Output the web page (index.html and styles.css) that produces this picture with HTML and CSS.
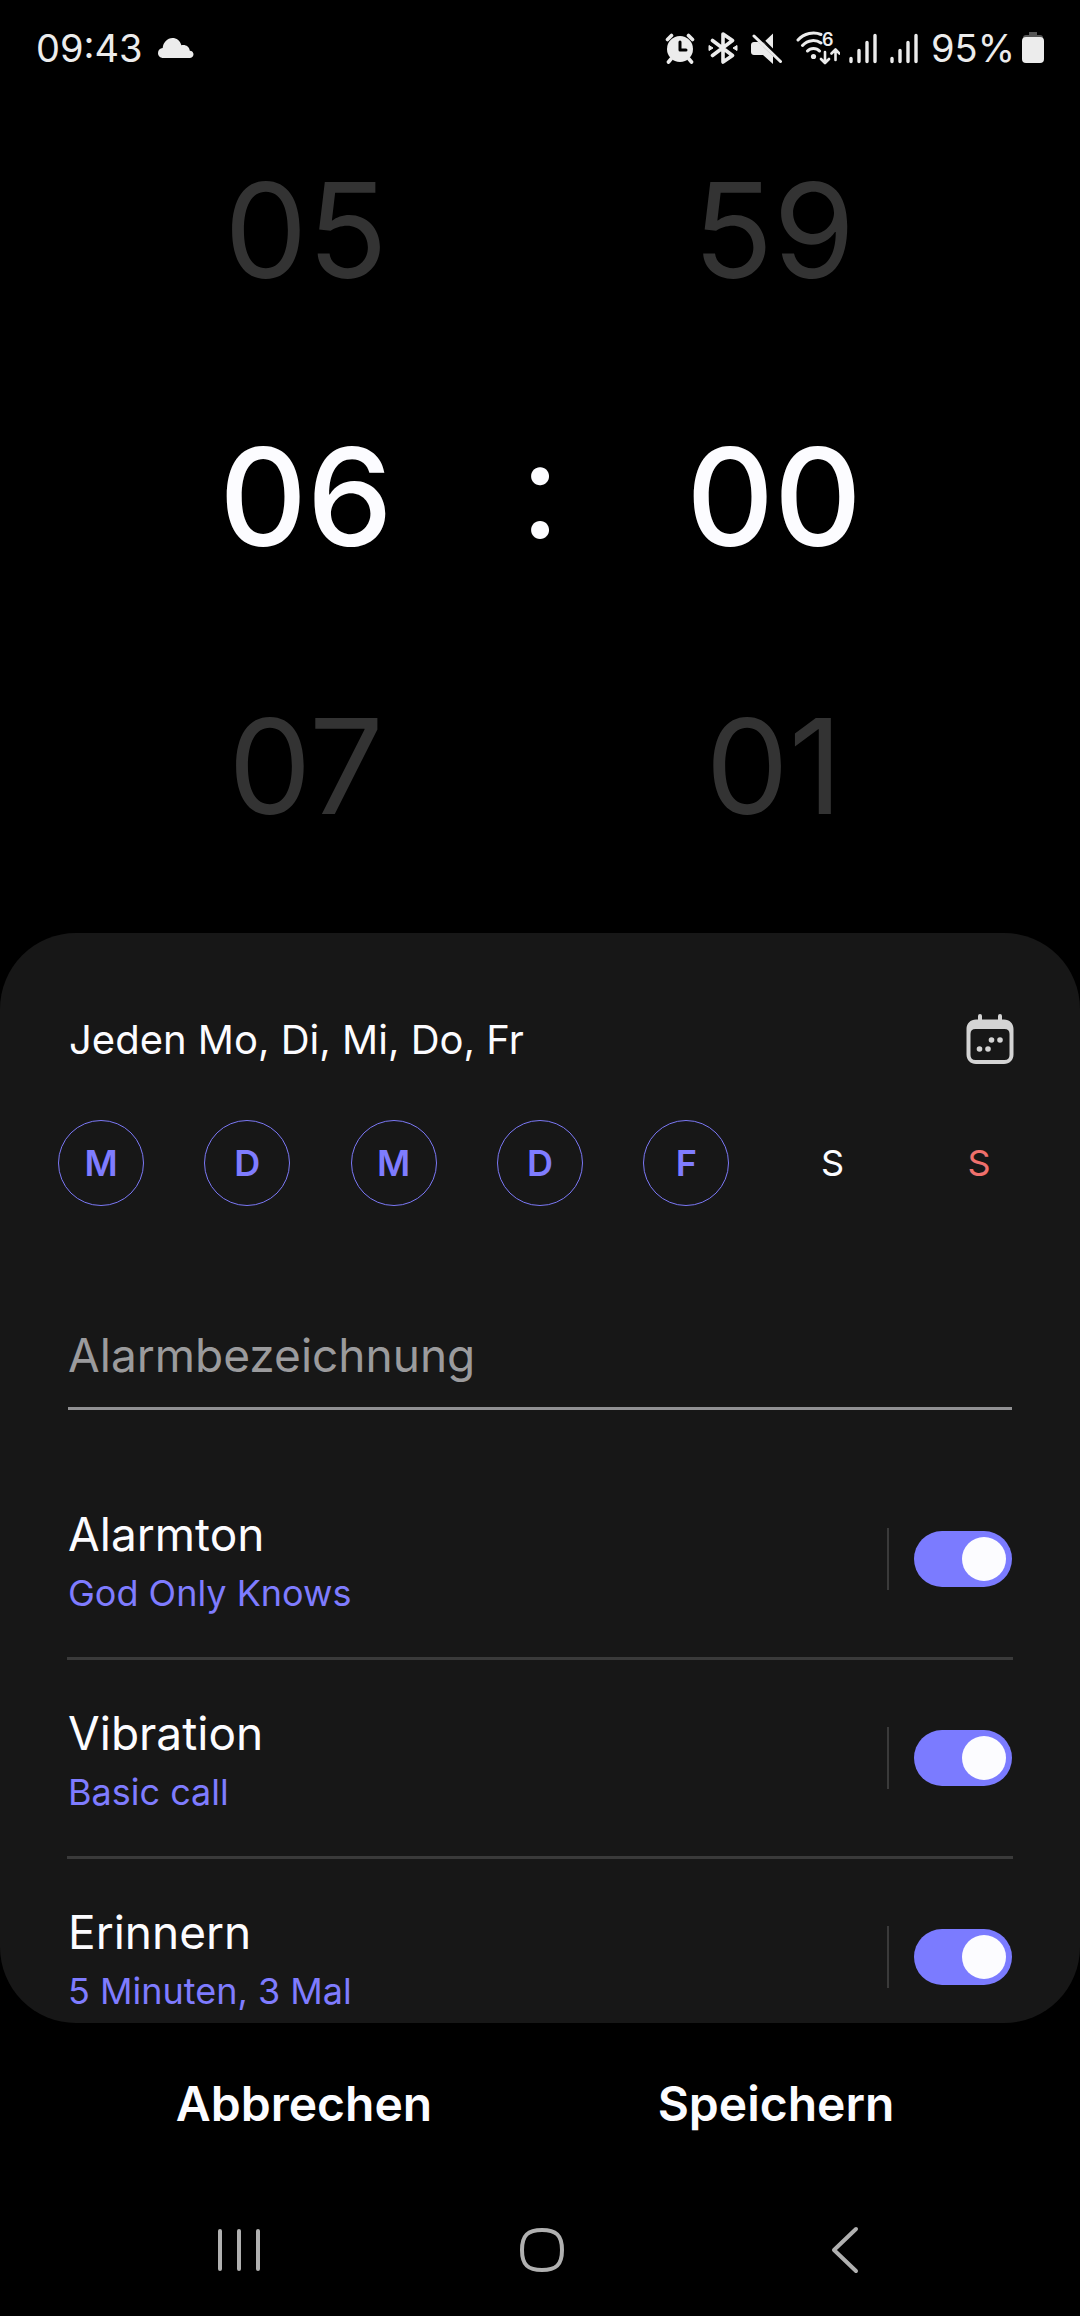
FILE: index.html
```
<!DOCTYPE html>
<html lang="de">
<head>
<meta charset="utf-8">
<meta name="viewport" content="width=device-width, initial-scale=1">
<title>Alarm bearbeiten</title>
<link rel="stylesheet" href="styles.css">
</head>
<body>
<div class="screen">
  <header class="status">
    <div class="status-left">
      <span>09:43</span>
      <svg width="36" height="20" viewBox="0 0 36 20" aria-hidden="true"><path fill="currentColor" d="M5.500 20C2 20 0 17.800 0 15c0-2.800 2-4.800 4.700-5C5.200 4.500 9.300 0 14.500 0c4 0 7.400 2.300 8.900 7.300 4.300-.9 7.800 1.400 8.400 5.400 2.200.2 3.700 1.500 3.700 3.600 0 2.200-1.700 3.700-4 3.700z"/></svg>
    </div>
    <div class="status-right">
      <svg width="30" height="32" viewBox="0 0 30 32" aria-hidden="true"><circle cx="15" cy="17" r="13" fill="currentColor"/><path stroke="currentColor" stroke-width="3.600" stroke-linecap="round" fill="none" d="M2.500 7.500l4-4M27.500 7.500l-4-4M6 27l-2.500 3M24 27l2.500 3"/><path stroke="#000" stroke-width="3" stroke-linejoin="round" stroke-linecap="round" fill="none" d="M15 10v8h6"/></svg>
      <svg width="30" height="32" viewBox="0 0 30 32" aria-hidden="true"><path stroke="currentColor" stroke-width="3.600" stroke-linecap="round" stroke-linejoin="round" fill="none" d="M4.500 8.500l20 15-9.500 6.500V2l9.500 6.500-20 15"/><path fill="currentColor" stroke="currentColor" stroke-linejoin="round" d="M1 13.500v5l4-2.500zM29 13.500v5l-4-2.500z"/></svg>
      <svg width="32" height="32" viewBox="0 0 32 32" aria-hidden="true"><path fill="currentColor" d="M3 10h4.500L22 24v8l-10-9H3c-1.700 0-3-1-3-3v-7c0-2 1.300-3 3-3zM12.500 10.500L22 1.500V18z"/><path stroke="#000" stroke-width="2" d="M5 1l26 26"/><path stroke="currentColor" stroke-width="3" stroke-linecap="round" d="M3 4l26.500 25.500"/></svg>
      <svg class="wifi" width="44" height="50" viewBox="0 -8 44 50" aria-hidden="true"><g stroke="currentColor" fill="none" stroke-linecap="round" stroke-width="3"><path d="M2 9C8 2 18 .5 25 3.500M6.500 14.500C12 8.500 20 8.500 25 12M11.500 20c3-3.500 9-3.500 12 0"/><path stroke-width="2.600" stroke-linejoin="round" d="M29 21v10.500M25 28l4 4 4-4M39.500 29V19M35.500 22.500l4-4 4 4"/></g><circle cx="17.500" cy="25.500" r="2.600" fill="currentColor"/><text class="wifi-generation" x="26" y="15">6</text></svg>
      <svg width="28" height="32" viewBox="0 0 28 32" aria-hidden="true"><path stroke="currentColor" stroke-width="3.400" stroke-linecap="round" d="M2 26.500v3M10 18.500v11M18 10.500v19M26 3.500v26"/></svg>
      <svg width="28" height="32" viewBox="0 0 28 32" aria-hidden="true"><path stroke="currentColor" stroke-width="3.400" stroke-linecap="round" d="M2 26.500v3M10 18.500v11M18 10.500v19M26 3.500v26"/></svg>
      <span class="percent">95%</span>
      <svg width="22" height="32" viewBox="0 0 22 32" aria-hidden="true"><path fill="#555" d="M7 0h8v3h3q3 0 3 3H1q0-3 3-3h3z"/><rect y="5" width="22" height="26" rx="4" fill="currentColor"/></svg>
    </div>
  </header>

  <main class="picker">
    <div class="wheel">
      <span class="value">05</span>
      <span class="value selected">06</span>
      <span class="value">07</span>
    </div>
    <span class="colon">:</span>
    <div class="wheel">
      <span class="value">59</span>
      <span class="value selected">00</span>
      <span class="value">01</span>
    </div>
  </main>

  <section class="card">
    <div class="repeat">
      <span>Jeden Mo, Di, Mi, Do, Fr</span>
      <button class="calendar" type="button" aria-label="Kalender">
        <svg width="48" height="52" viewBox="0 0 48 52" aria-hidden="true"><path fill="currentColor" fill-rule="evenodd" d="M10 6.500h28c5.500 0 9.500 4 9.500 9.500v25.500c0 5.500-4 9.500-9.500 9.500H10C4.500 51 .500 47 .500 41.500V16c0-5.500 4-9.500 9.500-9.500zM9.500 16Q4.500 16 4.500 21v21q0 5 5 5h29q5 0 5-5V21q0-5-5-5z"/><path stroke="currentColor" stroke-width="4" stroke-linecap="round" d="M14 3v6M34 3v6"/><g fill="currentColor"><circle cx="25.500" cy="27" r="2.800"/><circle cx="34" cy="27" r="2.800"/><circle cx="13.500" cy="36" r="2.800"/><circle cx="22" cy="36" r="2.800"/></g></svg>
      </button>
    </div>

    <div class="days">
      <button class="day on" type="button" aria-pressed="true" aria-label="Montag">M</button>
      <button class="day on" type="button" aria-pressed="true" aria-label="Dienstag">D</button>
      <button class="day on" type="button" aria-pressed="true" aria-label="Mittwoch">M</button>
      <button class="day on" type="button" aria-pressed="true" aria-label="Donnerstag">D</button>
      <button class="day on" type="button" aria-pressed="true" aria-label="Freitag">F</button>
      <button class="day" type="button" aria-pressed="false" aria-label="Samstag">S</button>
      <button class="day sunday" type="button" aria-pressed="false" aria-label="Sonntag">S</button>
    </div>

    <input class="name" type="text" placeholder="Alarmbezeichnung" aria-label="Alarmbezeichnung">

    <div class="options">
      <div class="option">
        <label class="text" for="sound"><span class="title">Alarmton</span><span class="detail">God Only Knows</span></label>
        <span class="rule"></span>
        <input class="toggle" id="sound" type="checkbox" role="switch" checked>
      </div>
      <div class="option">
        <label class="text" for="vibration"><span class="title">Vibration</span><span class="detail">Basic call</span></label>
        <span class="rule"></span>
        <input class="toggle" id="vibration" type="checkbox" role="switch" checked>
      </div>
      <div class="option">
        <label class="text" for="snooze"><span class="title">Erinnern</span><span class="detail">5 Minuten, 3 Mal</span></label>
        <span class="rule"></span>
        <input class="toggle" id="snooze" type="checkbox" role="switch" checked>
      </div>
    </div>
  </section>

  <div class="actions">
    <button type="button">Abbrechen</button>
    <button type="button">Speichern</button>
  </div>

  <nav class="system">
    <button type="button" aria-label="Letzte Apps"><svg width="44" height="46" viewBox="0 0 44 46" aria-hidden="true"><path stroke="currentColor" stroke-width="4" stroke-linecap="round" d="M3 4v38M22 4v38M41 4v38"/></svg></button>
    <button type="button" aria-label="Startseite"><svg width="46" height="46" viewBox="0 0 46 46" aria-hidden="true"><path fill="none" stroke="currentColor" stroke-width="4" d="M23 3C37 3 43 8 43 23S37 43 23 43 3 38 3 23 9 3 23 3z"/></svg></button>
    <button type="button" aria-label="Zurück"><svg width="28" height="48" viewBox="0 0 28 48" aria-hidden="true"><path fill="none" stroke="currentColor" stroke-width="4" stroke-linecap="round" stroke-linejoin="round" d="M25 3L3 24l22 21"/></svg></button>
  </nav>
</div>
</body>
</html>
```

FILE: styles.css
```
* {
  box-sizing: border-box;
}

body {
  margin: 0;
  background: #000;
  color: #fcfcff;
  font-family: Inter, "Liberation Sans", sans-serif;
}

button {
  margin: 0;
  padding: 0;
  border: 0;
  background: none;
  color: inherit;
  font: inherit;
  cursor: pointer;
}

svg {
  display: block;
  flex: none;
}

.screen {
  display: flex;
  flex-direction: column;
  height: 100vh;
}

/* Status bar */
.status {
  display: flex;
  flex: none;
  justify-content: space-between;
  align-items: center;
  height: 96px;
  padding: 0 36px;
  color: #ececec;
  font-size: 38px;
}

.status-left,
.status-right {
  display: flex;
  align-items: center;
}

.status-left {
  gap: 15px;
}

.status-right {
  gap: 13px;
}

.wifi {
  margin-right: -4px;
}

.wifi-generation {
  fill: currentColor;
  font-size: 18px;
  font-weight: 600;
}

.percent {
  margin-right: -6px;
}

/* Time wheels */
.picker {
  display: grid;
  flex: none;
  grid-template-columns: 1fr 1fr 1fr;
  align-items: center;
  justify-items: center;
  padding: 0 17.5% 33px;
  font-size: 132px;
}

.wheel {
  display: grid;
  grid-auto-rows: 268px;
  align-items: center;
  justify-items: center;
}

.value {
  color: #333;
}

.value.selected {
  padding-bottom: 4px;
  color: #fcfcff;
  font-size: 136px;
  font-weight: 500;
}

.colon {
  padding-bottom: 20px;
  font-size: 136px;
}

/* Settings card */
.card {
  flex: 1 1 0;
  min-height: 0;
  overflow: hidden;
  padding: 76px 58px 0;
  border-radius: 76px;
  background: #171717;
}

.repeat {
  display: flex;
  justify-content: space-between;
  align-items: center;
  height: 60px;
  padding: 0 8px 0 11px;
  font-size: 40px;
}

.calendar {
  color: #d4d4d4;
}

.days {
  display: flex;
  justify-content: space-between;
  margin-top: 51px;
}

.day {
  width: 86px;
  height: 86px;
  border: 1px solid transparent;
  border-radius: 50%;
  font-size: 36px;
}

.day.on {
  border-color: #7b78f5;
  color: #7f7cff;
  font-weight: 600;
}

.day.sunday {
  color: #f0706c;
}

.name {
  display: block;
  width: calc(100% - 20px);
  height: 108px;
  margin: 96px 10px 0;
  padding: 0;
  border: 0;
  border-bottom: 3px solid #919193;
  border-radius: 0;
  outline: 0;
  background: none;
  color: inherit;
  font: inherit;
  font-size: 46px;
}

.name::placeholder {
  color: #9b9b9d;
  opacity: 1;
}

.options {
  margin: 51px 9px 0;
}

.option {
  display: flex;
  align-items: center;
  height: 199px;
  border-bottom: 3px solid #3a3a3a;
}

.text {
  display: flex;
  flex: 1;
  flex-direction: column;
  padding: 4px 0 0 1px;
}

.title {
  font-size: 46px;
  line-height: 64px;
}

.detail {
  color: #7f7cff;
  font-size: 36px;
  line-height: 54px;
}

.rule {
  width: 2px;
  height: 62px;
  margin-right: 25px;
  background: #3a3a3a;
}

.toggle {
  display: flex;
  justify-content: flex-end;
  align-items: center;
  width: 98px;
  height: 56px;
  margin: 0 1px 0 0;
  padding: 6px;
  border-radius: 28px;
  background: #7b7bff;
  appearance: none;
  cursor: pointer;
}

.toggle::before {
  width: 44px;
  height: 44px;
  border-radius: 50%;
  background: #fcfcff;
  content: "";
}

.toggle:not(:checked) {
  justify-content: flex-start;
  background: #555;
}

/* Bottom buttons */
.actions {
  display: grid;
  flex: none;
  grid-template-columns: 1fr 1fr;
  height: 160px;
  padding: 0 68px;
  font-size: 48px;
  font-weight: 600;
}

.system {
  display: grid;
  flex: none;
  grid-template-columns: 1fr 1fr 1fr;
  height: 133px;
  padding: 0 84px 0 88px;
  color: #b0b0b0;
}

.system button {
  display: grid;
  place-items: center;
}
```
